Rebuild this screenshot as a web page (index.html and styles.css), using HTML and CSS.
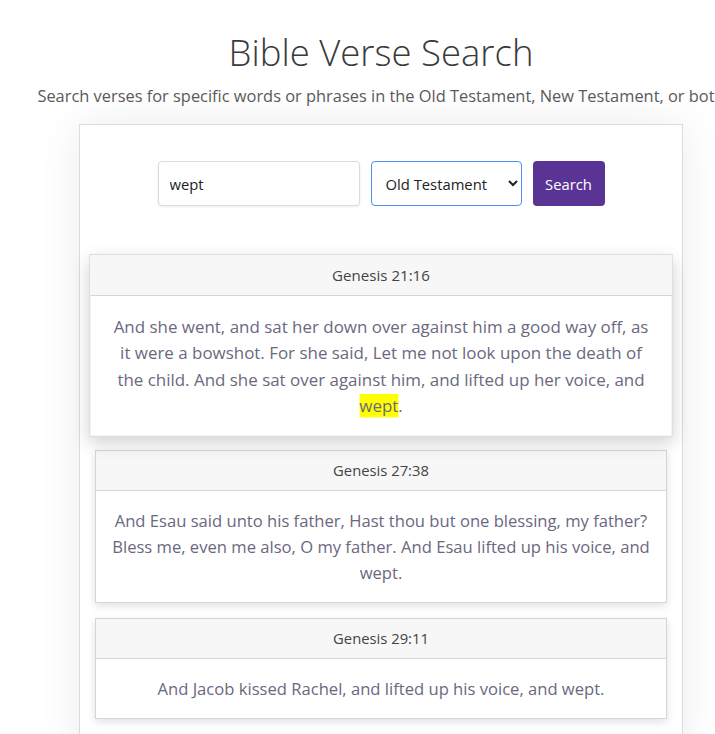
FILE: index.html
```html
<!DOCTYPE html>
<html>
<head>
<meta charset="utf-8">
<link rel="stylesheet" href="styles.css">
</head>
<body>
<div class="page">
  <h1 class="title">Bible Verse Search</h1>
  <p class="subtitle">Search verses for specific words or phrases in the Old Testament, New Testament, or both</p>
  <div class="panel">
    <form class="search">
      <input class="search-input" type="text" value="wept">
      <select class="search-select">
        <option>Old Testament</option>
        <option>New Testament</option>
        <option>Both</option>
      </select>
      <button class="search-btn" type="button">Search</button>
    </form>
    <div class="results">
      <div class="card card-active">
        <div class="card-head">Genesis 21:16</div>
        <div class="card-body">And she went, and sat her down over against him a good way off, as it were a bowshot. For she said, Let me not look upon the death of the child. And she sat over against him, and lifted up her voice, and <mark class="hl">wept</mark>.</div>
      </div>
      <div class="card">
        <div class="card-head">Genesis 27:38</div>
        <div class="card-body">And Esau said unto his father, Hast thou but one blessing, my father? Bless me, even me also, O my father. And Esau lifted up his voice, and wept.</div>
      </div>
      <div class="card">
        <div class="card-head">Genesis 29:11</div>
        <div class="card-body">And Jacob kissed Rachel, and lifted up his voice, and wept.</div>
      </div>
    </div>
  </div>
</div>
</body>
</html>
```
FILE: styles.css
```css
html, body {
  margin: 0;
  padding: 0;
  background: #fff;
  overflow: hidden;
}
.page {
  width: 762px;
  text-align: center;
  font-family: "Open Sans", "Noto Sans", sans-serif;
}
.title {
  margin: 0;
  padding-top: 27px;
  font-size: 36.5px;
  font-weight: 300;
  color: #3a3a3a;
  line-height: 50px;
}
.subtitle {
  margin: 8px 0 0;
  font-size: 16.4px;
  color: #5a5a5a;
  line-height: 22px;
}
.panel {
  width: 602px;
  margin: 17px auto 0;
  border: 1px solid #dcdcdc;
  box-shadow: 0 0 40px rgba(0,0,0,0.08);
  background: #fff;
  padding: 36px 0 40px;
}
.search {
  display: flex;
  justify-content: center;
  gap: 11px;
  margin: 0 0 50px;
}
.search-input {
  box-sizing: border-box;
  width: 202px;
  height: 45px;
  border: 1px solid #dcdcdc;
  border-radius: 4px;
  padding: 0 11px;
  font-family: "Open Sans", sans-serif;
  font-size: 14.8px;
  color: #222;
  box-shadow: 0 1px 3px rgba(0,0,0,0.08);
  outline: none;
}
.search-select {
  box-sizing: border-box;
  width: 151px;
  height: 45px;
  border: 1px solid #4d8ef8;
  border-radius: 4px;
  padding: 0 6px 0 10px;
  font-family: "Open Sans", sans-serif;
  font-size: 14.8px;
  color: #222;
  background: #fff;
  outline: none;
}
.search-btn {
  box-sizing: border-box;
  width: 72px;
  height: 45px;
  border: none;
  border-radius: 4px;
  background: #5a3495;
  color: #fff;
  font-family: "Open Sans", sans-serif;
  font-size: 14.8px;
}
.results {
  display: flex;
  flex-direction: column;
  gap: 15px;
  padding: 0 15px;
}
.card {
  border: 1px solid #d6d6d6;
  background: #fff;
  box-shadow: 0 3px 8px rgba(0,0,0,0.12);
}
.card-active {
  transform: scale(1.02);
  box-shadow: 0 6px 16px rgba(0,0,0,0.18);
}
.card-head {
  background: #f7f7f7;
  border-bottom: 1px solid #d6d6d6;
  height: 39px;
  line-height: 39px;
  font-size: 14.8px;
  color: #444;
}
.card-body {
  padding: 17px 16px 16px;
  font-size: 16.6px;
  line-height: 26px;
  color: #6b6880;
}
.hl {
  background: #ffff00;
  color: #6b6880;
  padding: 0;
}
```
